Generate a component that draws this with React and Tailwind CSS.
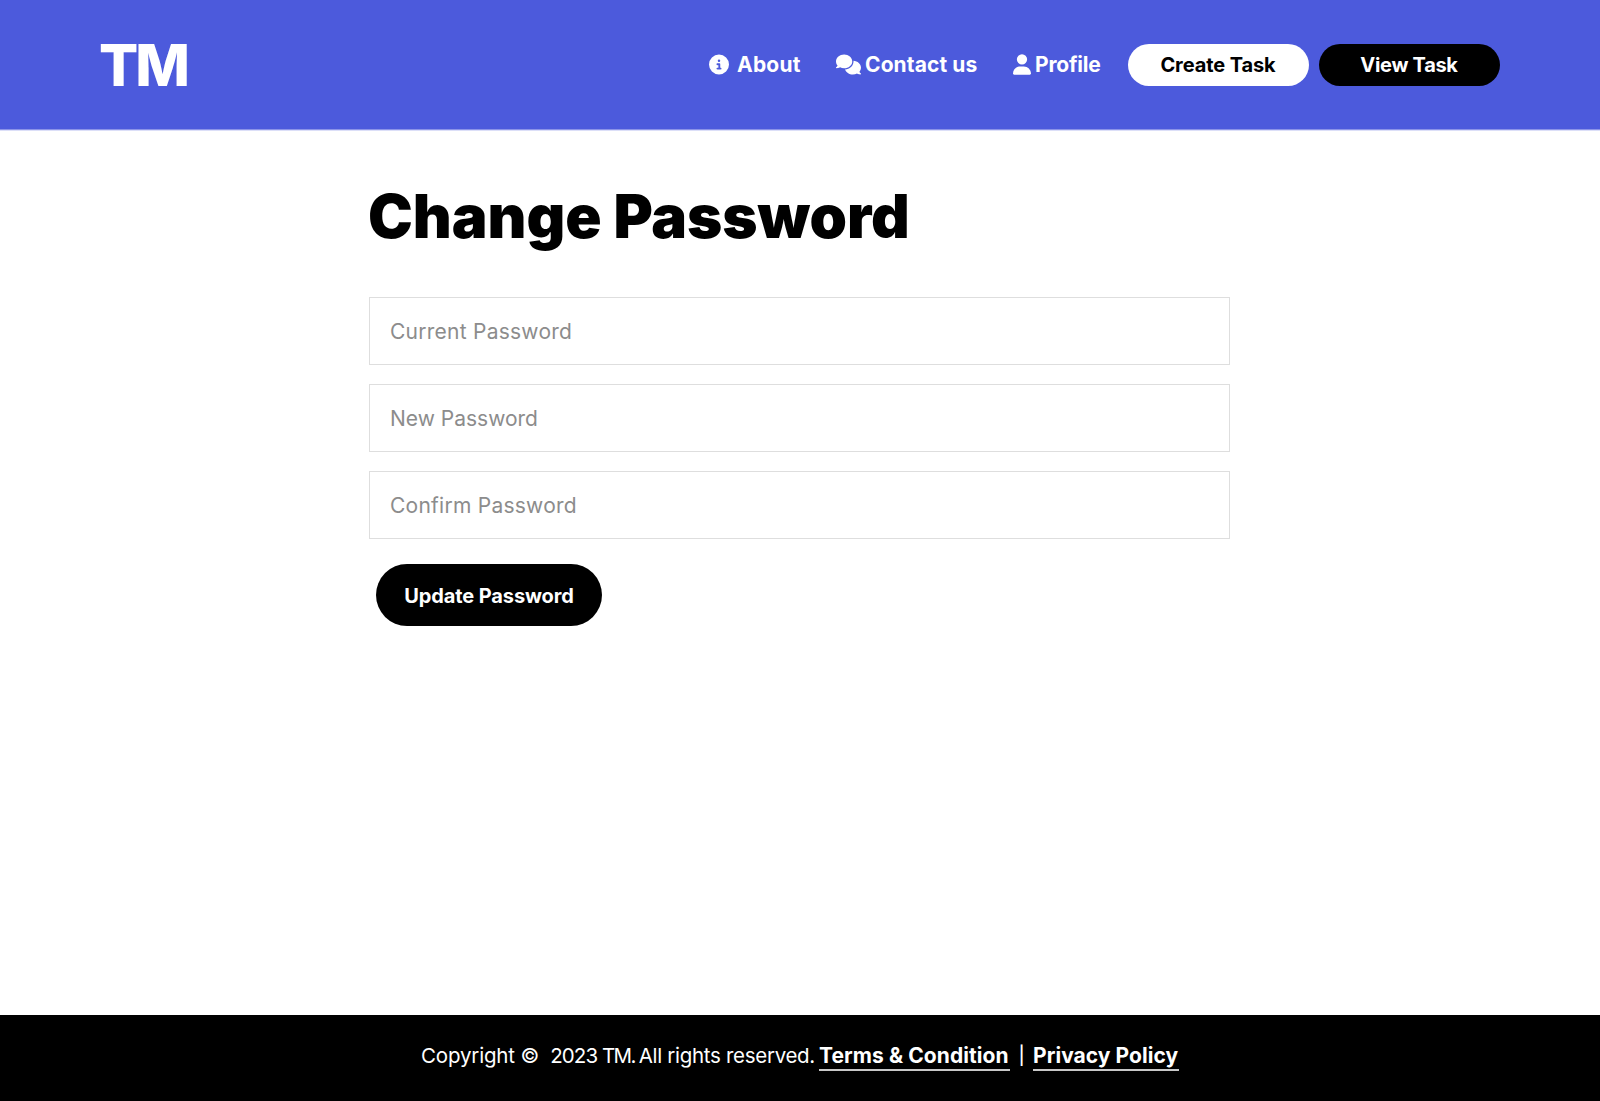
import { FaCircleInfo, FaComments, FaUser } from "react-icons/fa6";

const fields = [
  { label: "Current Password", tracking: "placeholder:tracking-[0.25px]" },
  { label: "New Password", tracking: "placeholder:tracking-normal" },
  { label: "Confirm Password", tracking: "placeholder:tracking-[0.25px]" },
];

function Header() {
  return (
    <header className="border-b border-[#dcdff8]">
      <div className="flex h-[130px] items-center justify-between border-b border-[#8b93e8] bg-[#4c5adc] pr-[100px] pl-[99px] text-white">
        <a href="#" className="text-[58px] leading-none font-extrabold tracking-[-3px]">TM</a>
        <nav className="flex items-center text-[21px] leading-none font-bold whitespace-nowrap">
          <a href="#" className="flex w-[127px] items-center">
            <FaCircleInfo className="mr-[8px] h-[21px] w-[20px] shrink-0" />
            <span className="tracking-[0.2px]">About</span>
          </a>
          <a href="#" className="flex w-[177px] items-center">
            <FaComments className="mr-[4px] h-[25px] w-[25px] shrink-0" />
            <span className="tracking-[0.1px]">Contact us</span>
          </a>
          <a href="#" className="flex w-[115px] items-center">
            <FaUser className="mr-[4px] h-[21px] w-[18px] shrink-0" />
            <span className="tracking-[-0.2px]">Profile</span>
          </a>
          <div className="flex gap-[10px] text-[20px]">
            <button className="h-[42px] w-[181px] rounded-full bg-white pr-px tracking-[-0.1px] text-black">Create Task</button>
            <button className="h-[42px] w-[181px] rounded-full bg-black pr-px tracking-[-0.3px] text-white">View Task</button>
          </div>
        </nav>
      </div>
    </header>
  );
}

export default function App() {
  return (
    <div className="flex min-h-[1101px] flex-col bg-white font-['Inter',sans-serif] text-black">
      <Header />
      <main className="mx-auto w-[862px] flex-1 pt-[45px]">
        <h1 className="-ml-px text-[60px] leading-[80px] font-black tracking-[-0.05px] whitespace-nowrap">Change Password</h1>
        <form className="mt-[41px] flex flex-col items-start gap-[19px]">
          {fields.map(({ label, tracking }) => (
            <input
              key={label}
              type="password"
              placeholder={label}
              className={`h-[68px] w-[861px] border border-[#dedede] px-5 text-[21px] placeholder:text-[#8c8c8c] ${tracking}`}
            />
          ))}
          <button type="button" className="mt-[6px] ml-[7px] h-[62px] w-[226px] rounded-full bg-black pt-[2px] text-[20px] font-bold tracking-[-0.1px] whitespace-nowrap text-white">
            Update Password
          </button>
        </form>
      </main>
      <footer className="flex h-[86px] justify-center bg-black pt-[26px] text-[21px] leading-[29px] whitespace-pre text-white">
        <span className="w-[398px] text-[20.5px] tracking-[-0.22px]">
          <span className="tracking-[-0.17px]">{"Copyright ©  "}</span>
          <span className="tracking-[-0.9px]">{"2023 "}</span>
          <span className="tracking-[-1.7px]">{"TM. "}</span>
          <span className="tracking-[-0.3px]">All rights reserved.</span>
        </span>
        <a href="#" className="h-[30px] w-[191px] border-b-2 border-[#c8c8c8] font-bold tracking-[0.08px]">Terms &amp; Condition</a>
        <span className="w-[23px] text-center text-[18px] leading-[30px] font-medium">|</span>
        <a href="#" className="h-[30px] w-[146px] border-b-2 border-[#c8c8c8] font-bold tracking-[0.05px]">Privacy Policy</a>
      </footer>
    </div>
  );
}
